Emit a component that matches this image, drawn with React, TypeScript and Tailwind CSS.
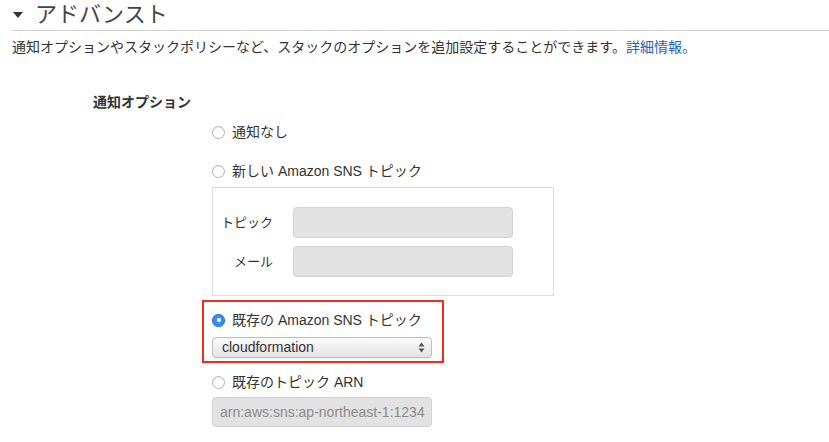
import React from 'react';

const Radio = ({ checked = false }: { checked?: boolean }) =>
  checked ? (
    <span className="flex h-[13px] w-[13px] shrink-0 items-center justify-center rounded-full bg-[#3a8ee6] shadow-[inset_0_0_0_1px_#2f7dd0]">
      <span className="h-[4px] w-[4px] rounded-full bg-white" />
    </span>
  ) : (
    <span className="h-[13px] w-[13px] shrink-0 rounded-full border border-[#b3b3b3] bg-white shadow-[inset_0_1px_1px_rgba(0,0,0,0.08)]" />
  );

const RadioRow = ({ label, checked }: { label: string; checked?: boolean }) => (
  <label className="flex h-[20px] items-center gap-[7px] text-[14px] text-[#333]">
    <Radio checked={checked} />
    <span>{label}</span>
  </label>
);

const App = () => {
  return (
    <div
      className="h-[442px] w-[829px] overflow-hidden bg-white text-[#333]"
      style={{ fontFamily: '"Liberation Sans", "Noto Sans CJK JP", sans-serif' }}
    >
      {/* Section heading */}
      <div className="ml-[12px] flex h-[31px] items-center gap-[12px] border-b border-[#cfcfcf]">
        <svg width="10" height="6" viewBox="0 0 10 6" className="ml-[1px]">
          <path d="M0 0 L10 0 L5 6 Z" fill="#333" />
        </svg>
        <span className="text-[22px] leading-none text-[#444]">アドバンスト</span>
      </div>

      <p className="ml-[12px] mt-[7px] text-[14px] leading-[18px]">
        通知オプションやスタックポリシーなど、スタックのオプションを追加設定することができます。
        <a className="text-[#2962b3]">詳細情報。</a>
      </p>

      <div className="ml-[93px] mt-[36px] h-[20px] text-[14px] font-bold leading-[20px]">通知オプション</div>

      <div className="ml-[212px] flex flex-col items-start">
        <div className="mt-[10px]">
          <RadioRow label="通知なし" />
        </div>
        <div className="mt-[19px]">
          <RadioRow label="新しい Amazon SNS トピック" />
        </div>

        {/* New topic box */}
        <div className="mt-[6px] flex w-[342px] flex-col gap-[8px] border border-[#dcdcdc] pb-[18px] pt-[19px]">
          <div className="flex items-center">
            <span className="w-[60px] text-right text-[13px]">トピック</span>
            <span className="ml-[20px] h-[31px] w-[220px] rounded-[4px] border border-[#d2d2d2] bg-[#e2e2e2]" />
          </div>
          <div className="flex items-center">
            <span className="w-[60px] text-right text-[13px]">メール</span>
            <span className="ml-[20px] h-[31px] w-[220px] rounded-[4px] border border-[#d2d2d2] bg-[#e2e2e2]" />
          </div>
        </div>

        {/* Highlighted existing topic */}
        <div className="-ml-[10px] mt-[4px] border-2 border-[#ee2d22] pb-[3px] pl-[8px] pr-[10px] pt-[8px]">
          <RadioRow label="既存の Amazon SNS トピック" checked />
          <div className="mt-[7px] flex h-[21px] w-[220px] items-center justify-between rounded-[4px] border border-[#bdbdbd] bg-gradient-to-b from-[#fbfbfb] to-[#e3e3e3] pl-[9px] pr-[6px] text-[14px] shadow-[0_1px_1px_rgba(0,0,0,0.08)]">
            <span>cloudformation</span>
            <svg width="7" height="11" viewBox="0 0 7 11">
              <path d="M0.5 4.5 L3.5 0.5 L6.5 4.5 Z" fill="#555" />
              <path d="M0.5 6.5 L3.5 10.5 L6.5 6.5 Z" fill="#555" />
            </svg>
          </div>
        </div>

        <div className="mt-[9px]">
          <RadioRow label="既存のトピック ARN" />
        </div>
        <div className="mt-[5px] flex h-[30px] w-[220px] items-center overflow-hidden whitespace-nowrap rounded-[4px] border border-[#d2d2d2] bg-[#e2e2e2] pl-[7px] text-[14px] text-[#8a8a8a]">
          arn:aws:sns:ap-northeast-1:1234
        </div>
      </div>
    </div>
  );
};

export default App;
